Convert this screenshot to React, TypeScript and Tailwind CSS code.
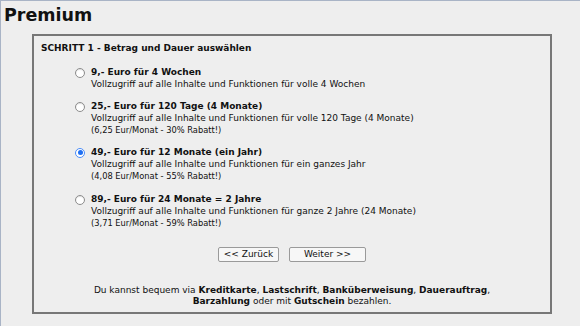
const options = [
  {
    title: '9,- Euro für 4 Wochen',
    desc: 'Vollzugriff auf alle Inhalte und Funktionen für volle 4 Wochen',
    gap: 'mt-[12px]',
  },
  {
    title: '25,- Euro für 120 Tage (4 Monate)',
    desc: 'Vollzugriff auf alle Inhalte und Funktionen für volle 120 Tage (4 Monate)',
    note: '(6,25 Eur/Monat - 30% Rabatt!)',
    gap: 'mt-[10px]',
  },
  {
    title: '49,- Euro für 12 Monate (ein Jahr)',
    desc: 'Vollzugriff auf alle Inhalte und Funktionen für ein ganzes Jahr',
    note: '(4,08 Eur/Monat - 55% Rabatt!)',
    gap: 'mt-[10px]',
    checked: true,
  },
  {
    title: '89,- Euro für 24 Monate = 2 Jahre',
    desc: 'Vollzugriff auf alle Inhalte und Funktionen für ganze 2 Jahre (24 Monate)',
    note: '(3,71 Eur/Monat - 59% Rabatt!)',
    gap: 'mt-[11px]',
  },
];

const Radio = ({ checked }: { checked?: boolean }) =>
  checked ? (
    <span className="mt-[1.5px] flex h-[10px] w-[10px] shrink-0 items-center justify-center rounded-full border-[1.5px] border-[#4b8df8] bg-white">
      <span className="h-[5px] w-[5px] rounded-full bg-[#1f6ff2]" />
    </span>
  ) : (
    <span className="mt-[1.5px] h-[10px] w-[10px] shrink-0 rounded-full border border-[#8c8c8c] bg-white shadow-[inset_0_1px_1px_rgba(0,0,0,0.12)]" />
  );

export default function App() {
  return (
    <div className="min-h-screen border-l border-t border-[#a9b4c6] bg-[#eeeeee] font-['DejaVu_Sans',Verdana,sans-serif] text-[#111]">
      <h1 className="pl-[3px] pt-[4px] text-[17.5px] font-bold leading-[20px]">Premium</h1>

      {/* Schritt 1 */}
      <div className="ml-[31px] mt-[9px] h-[280px] w-[520px] border-2 border-[#777777] px-[7px] pt-[6px]">
        <div className="text-[9px] font-bold leading-[12px]">SCHRITT 1 - Betrag und Dauer auswählen</div>

        {options.map((o) => (
          <div key={o.title} className={`flex pl-[34px] ${o.gap}`}>
            <Radio checked={o.checked} />
            <div className="ml-[6px] leading-[12px]">
              <div className="text-[9px] font-bold">{o.title}</div>
              <div className="text-[9px]">{o.desc}</div>
              {o.note && <div className="text-[8.3px]">{o.note}</div>}
            </div>
          </div>
        ))}

        <div className="mt-[18px] flex justify-center gap-[10px]">
          <button className="h-[15px] w-[61px] rounded-[2px] border border-[#9a9a9a] bg-[#f7f7f7] text-[9px] leading-[13px] text-[#111]">
            &lt;&lt; Zurück
          </button>
          <button className="h-[15px] w-[77px] rounded-[2px] border border-[#9a9a9a] bg-[#f7f7f7] text-[9px] leading-[13px] text-[#111]">
            Weiter &gt;&gt;
          </button>
        </div>

        <p className="mt-[23px] text-center text-[9px] leading-[11px]">
          Du kannst bequem via <b>Kreditkarte</b>, <b>Lastschrift</b>, <b>Banküberweisung</b>, <b>Dauerauftrag</b>,
          <br />
          <b>Barzahlung</b> oder mit <b>Gutschein</b> bezahlen.
        </p>
      </div>
    </div>
  );
}
